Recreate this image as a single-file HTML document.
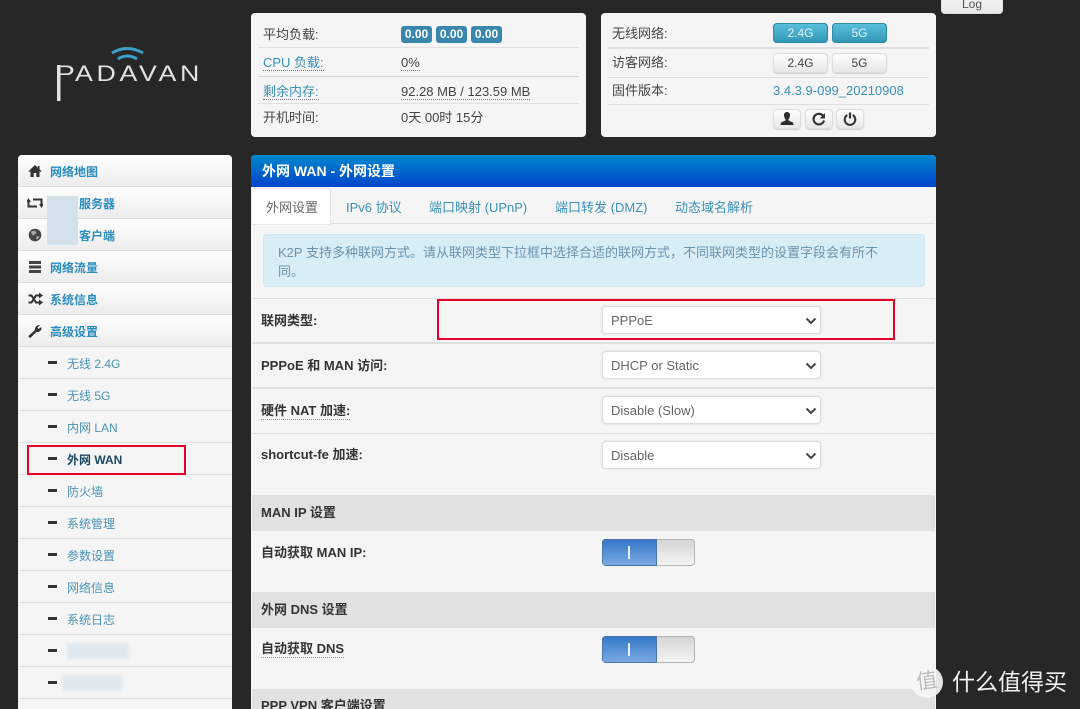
<!DOCTYPE html>
<html lang="zh"><head><meta charset="utf-8"><title>Padavan</title>
<style>
html,body{margin:0;padding:0;width:1080px;height:709px;overflow:hidden;background:#272727}
body{position:relative;font:13px/18px "Liberation Sans","Noto Sans CJK SC",sans-serif;color:#444}
.a{position:absolute;white-space:nowrap}
.panel{position:absolute;background:#f5f5f5;border-radius:4px}
.ln{position:absolute;height:1px;background:#dfdfdf}
.lnk{color:#3a91b8}
.dot{border-bottom:1px dotted #778}
.badge{position:absolute;top:26px;height:17px;width:31px;background:#3a87ad;border-radius:3px;color:#fff;font:bold 12px/17px "Liberation Sans",sans-serif;text-align:center}
.btn{position:absolute;border-radius:4px;text-align:center;font-size:12px;color:#444;background:linear-gradient(#fff,#e6e6e6);box-shadow:0 0 0 1px #ddd inset,0 1px 1px rgba(0,0,0,.15)}
.on{background:linear-gradient(#5bc0de,#2f96b4);color:#e4f2f6;box-shadow:0 0 0 1px #2f8aa6 inset}
.nav{position:absolute;left:18px;width:214px;height:31px;background:linear-gradient(#fff,#ececec);border-bottom:1px solid #dcdcdc}
.nav b{position:absolute;top:8px;left:32px;font-size:12px;font-weight:bold;line-height:18px;color:#2a8dc0;white-space:nowrap}
.nav svg{position:absolute;left:9px;top:8.500px}
.sub{position:absolute;left:18px;width:214px;height:31px;border-bottom:1px solid #e2e2e2}
.sub i{position:absolute;left:30px;top:14px;width:9px;height:3px;background:#333}
.sub span{position:absolute;left:49px;top:8px;font-size:12px;line-height:18px;color:#4a94b8;white-space:nowrap}
.lab{position:absolute;left:261px;font-weight:bold;font-size:13px;color:#333;white-space:nowrap}
.sel{position:absolute;left:602px;width:219px;height:28px;background:#fff;border:1px solid #ddd;border-radius:4px;box-sizing:border-box;padding-left:8px;font-size:13px;line-height:28px;color:#666;box-shadow:0 0 2px rgba(0,0,0,.12)}
.sel svg{position:absolute;right:3px;top:10px}
.sec{position:absolute;left:252px;width:683px;background:#e1e1e1}
.tog{position:absolute;left:602px;width:93px;height:27px;border-radius:4px;overflow:hidden;box-shadow:0 0 0 1px #b5b5b5 inset;background:linear-gradient(#d4d4d4,#f5f5f5)}
.tog u{position:absolute;left:0;top:0;width:55px;height:27px;background:linear-gradient(#3377c8,#7cabe2);box-shadow:0 0 0 1px #4a76ab inset}
.tog s{position:absolute;left:26px;top:7px;width:2px;height:13px;background:#e8f0fa}
.tab{position:absolute;top:190px;font-size:13px;line-height:18px;color:#3a91b8;white-space:nowrap}
</style></head><body>

<svg class="a" style="left:50px;top:40px" width="155" height="66" viewBox="50 40 155 66">
<path d="M112 53Q127 44 143 53" fill="none" stroke="#3a9fca" stroke-width="3"/>
<path d="M118 59Q127 53 137 59" fill="none" stroke="#3a9fca" stroke-width="3"/>
<text x="55" y="81" font-family="Liberation Sans" font-size="22" fill="#e2e2e2" textLength="20" lengthAdjust="spacingAndGlyphs">P</text>
<text x="75" y="81" font-family="Liberation Sans" font-size="22" fill="#e2e2e2" letter-spacing="3" textLength="128" lengthAdjust="spacingAndGlyphs">ADAVAN</text>
<rect x="57" y="65" width="3.500" height="36" fill="#e2e2e2"/>
</svg>

<div class="panel" style="left:251px;top:13px;width:335px;height:124px"></div>
<div class="a" style="left:263px;top:26px">平均负载:</div>
<div class="badge" style="left:401px">0.00</div><div class="badge" style="left:436px">0.00</div><div class="badge" style="left:471px">0.00</div>
<div class="ln" style="left:258px;top:47px;width:321px"></div>
<div class="a lnk" style="left:263px;top:54px;line-height:17px"><span class="dot">CPU 负载:</span></div>
<div class="a" style="left:401px;top:54px;line-height:17px"><span class="dot">0%</span></div>
<div class="ln" style="left:258px;top:76px;width:321px;background:#d5d5d5"></div>
<div class="a lnk" style="left:263px;top:83px;line-height:17px"><span class="dot">剩余内存:</span></div>
<div class="a" style="left:401px;top:83px;line-height:17px"><span class="dot">92.28 MB / 123.59 MB</span></div>
<div class="ln" style="left:258px;top:103px;width:321px"></div>
<div class="a" style="left:263px;top:109px">开机时间:</div>
<div class="a" style="left:401px;top:109px">0天 00时 15分</div>

<div class="panel" style="left:601px;top:13px;width:335px;height:124px"></div>
<div class="a" style="left:612px;top:25px">无线网络:</div>
<div class="btn on" style="left:773px;top:23px;width:55px;height:20px;line-height:20px">2.4G</div>
<div class="btn on" style="left:832px;top:23px;width:55px;height:20px;line-height:20px">5G</div>
<div class="ln" style="left:608px;top:47px;width:321px;height:2px"></div>
<div class="a" style="left:612px;top:54px">访客网络:</div>
<div class="btn" style="left:773px;top:53px;width:55px;height:20px;line-height:20px">2.4G</div>
<div class="btn" style="left:832px;top:53px;width:55px;height:20px;line-height:20px">5G</div>
<div class="ln" style="left:608px;top:77px;width:321px"></div>
<div class="a" style="left:612px;top:82px">固件版本:</div>
<div class="a lnk" style="left:773px;top:82px">3.4.3.9-099_20210908</div>
<div class="ln" style="left:608px;top:104px;width:321px"></div>
<div class="btn" style="left:773px;top:109px;width:28px;height:20px"><svg width="14" height="14" viewBox="0 0 14 14" style="margin-top:3px"><path d="M7 0C4.800 0 4 1.600 4 3.500 4 5 4.800 6.500 5.500 7.300L5.500 8.500 1 10.500 0.500 13H13.500L13 10.500 8.500 8.500 8.500 7.300C9.200 6.500 10 5 10 3.500 10 1.600 9.200 0 7 0Z" fill="#2d2d2d"/></svg></div>
<div class="btn" style="left:805px;top:109px;width:28px;height:20px"><svg width="14" height="14" viewBox="0 0 14 14" style="margin-top:3px"><path d="M11.500 4.500A5.300 5.300 0 1 0 12 8.500" fill="none" stroke="#333" stroke-width="2.200"/><path d="M13 1V6.500H7.800Z" fill="#333"/></svg></div>
<div class="btn" style="left:836px;top:109px;width:28px;height:20px"><svg width="14" height="14" viewBox="0 0 14 14" style="margin-top:3px"><path d="M4.300 3A5.300 5.300 0 1 0 9.700 3" fill="none" stroke="#333" stroke-width="2"/><path d="M7 0.500V6.500" stroke="#333" stroke-width="2.200"/></svg></div>

<div class="btn" style="left:941px;top:-6px;width:62px;height:20px;line-height:20px;font-size:12px;color:#555;background:linear-gradient(#f4f4f4,#e8e8e8)">Log</div>

<!-- sidebar -->
<div class="panel" style="left:18px;top:155px;width:214px;height:560px"></div>
<div class="nav" style="top:155px;border-radius:4px 4px 0 0"><svg width="14" height="14" viewBox="0 0 14 14" style="left:10px"><path d="M7 1 0.500 7.300 1.500 8 2.500 7.200V13H5.700V9H8.300V13H11.500V7.200L12.500 8 13.500 7.300 11.500 5.300V2H9.800V3.700Z" fill="#333"/></svg><b>网络地图</b></div>
<div class="nav" style="top:187px"><svg width="16" height="14" viewBox="0 0 16 14" style="left:9px"><path d="M1.500 5V10.500H10M14.500 9V3.500H6" fill="none" stroke="#333" stroke-width="2"/><path d="M0 5.500 1.500 3 3 5.500ZM13 8.500H16L14.500 11Z" fill="#333" stroke="#333"/></svg><b style="left:61px">服务器</b></div>
<div class="nav" style="top:219px"><svg width="14" height="14" viewBox="0 0 14 14" style="left:10px"><circle cx="7" cy="7" r="6.300" fill="#444"/><path d="M3 3.500 7 2.500 8.500 5 5.500 7.500 3.500 6ZM9 8 11.500 8.500 9.500 11.500 8 10.500Z" fill="#aaa"/></svg><b style="left:61px">客户端</b></div>
<div class="nav" style="top:251px"><svg width="14" height="14" viewBox="0 0 14 14" style="left:10px"><path d="M1 1H13V4H1ZM1 5.500H13V8.500H1ZM1 10H13V13H1Z" fill="#444"/></svg><b>网络流量</b></div>
<div class="nav" style="top:283px"><svg width="15" height="14" viewBox="0 0 15 14" style="left:10px"><path d="M0.500 3.500H3.500L8 10.500H11.500M0.500 10.500H3.500L8 3.500H11.500" fill="none" stroke="#333" stroke-width="2"/><path d="M11 0.500 15 3.500 11 6.500ZM11 7.500 15 10.500 11 13.500Z" fill="#333"/></svg><b>系统信息</b></div>
<div class="nav" style="top:315px"><svg width="14" height="14" viewBox="0 0 14 14" style="left:10px"><path d="M1 13.500 0.500 12 7 6C6.600 3.500 8.500 0.800 12 1L9.500 3.500 10.500 5 13.500 3C14 6.500 11 8.500 8.500 8L2.500 13.800Z" fill="#333"/></svg><b>高级设置</b></div>
<div class="a" style="left:47px;top:196px;width:31px;height:49px;background:#d3e2ea"></div>

<div class="sub" style="top:347px"><i></i><span>无线 2.4G</span></div>
<div class="sub" style="top:379px"><i></i><span>无线 5G</span></div>
<div class="sub" style="top:411px"><i></i><span>内网 LAN</span></div>
<div class="sub" style="top:443px"><i></i><span style="font-weight:bold;color:#1d4a63">外网 WAN</span></div>
<div class="sub" style="top:475px"><i></i><span>防火墙</span></div>
<div class="sub" style="top:507px"><i></i><span>系统管理</span></div>
<div class="sub" style="top:539px"><i></i><span>参数设置</span></div>
<div class="sub" style="top:571px"><i></i><span>网络信息</span></div>
<div class="sub" style="top:603px"><i></i><span>系统日志</span></div>
<div class="sub" style="top:635px"><i></i></div>
<div class="sub" style="top:667px"><i></i></div>
<div class="a" style="left:67px;top:643px;width:62px;height:16px;background:#dfe8ee;filter:blur(1.500px)"></div>
<div class="a" style="left:62px;top:675px;width:60px;height:16px;background:#dfe8ee;filter:blur(1.500px)"></div>
<div class="a" style="left:27px;top:445px;width:159px;height:30px;box-sizing:border-box;border:2px solid #e8002a"></div>

<!-- main -->
<div class="panel" style="left:251px;top:155px;width:685px;height:560px"></div>
<div class="a" style="left:251px;top:155px;width:685px;height:32px;border-radius:4px 4px 0 0;background:linear-gradient(#0088cc,#0044cc)"></div>
<div class="a" style="left:262px;top:162px;font-size:14px;font-weight:bold;color:#fff">外网 WAN - 外网设置</div>
<div class="ln" style="left:252px;top:223px;width:683px"></div>
<div class="a" style="left:252px;top:189px;width:78px;height:35px;background:#fff;border-radius:3px 3px 0 0;box-shadow:0 0 0 1px #e6e6e6"></div>
<div class="tab" style="left:266px;top:199px;color:#666">外网设置</div>
<div class="tab" style="left:346px;top:199px">IPv6 协议</div>
<div class="tab" style="left:429px;top:199px">端口映射 (UPnP)</div>
<div class="tab" style="left:555px;top:199px">端口转发 (DMZ)</div>
<div class="tab" style="left:675px;top:199px">动态域名解析</div>
<div class="a" style="left:263px;top:234px;width:662px;height:53px;background:#d9edf7;border:1px solid #d0e6f2;border-radius:4px;box-sizing:border-box"></div>
<div class="a" style="left:278px;top:243px;color:#6a93ad;line-height:19px">K2P 支持多种联网方式。请从联网类型下拉框中选择合适的联网方式，不同联网类型的设置字段会有所不<br>同。</div>

<div class="ln" style="left:252px;top:298px;width:683px"></div>
<div class="lab" style="top:312px">联网类型:</div>
<div class="sel" style="top:306px">PPPoE<svg width="12" height="8" viewBox="0 0 12 8"><path d="M1.500 1.500 6 6 10.500 1.500" fill="none" stroke="#444" stroke-width="2"/></svg></div>
<div class="a" style="left:437px;top:299px;width:458px;height:41px;box-sizing:border-box;border:2px solid #e8002a"></div>
<div class="ln" style="left:252px;top:342px;width:683px;height:2px"></div>
<div class="lab" style="top:357px">PPPoE 和 MAN 访问:</div>
<div class="sel" style="top:351px">DHCP or Static<svg width="12" height="8" viewBox="0 0 12 8"><path d="M1.500 1.500 6 6 10.500 1.500" fill="none" stroke="#444" stroke-width="2"/></svg></div>
<div class="ln" style="left:252px;top:387px;width:683px;height:2px"></div>
<div class="lab" style="top:402px"><span style="border-bottom:1px dotted #999;line-height:16px;display:inline-block">硬件 NAT 加速:</span></div>
<div class="sel" style="top:396px">Disable (Slow)<svg width="12" height="8" viewBox="0 0 12 8"><path d="M1.500 1.500 6 6 10.500 1.500" fill="none" stroke="#444" stroke-width="2"/></svg></div>
<div class="ln" style="left:252px;top:433px;width:683px"></div>
<div class="lab" style="top:446px">shortcut-fe 加速:</div>
<div class="sel" style="top:441px">Disable<svg width="12" height="8" viewBox="0 0 12 8"><path d="M1.500 1.500 6 6 10.500 1.500" fill="none" stroke="#444" stroke-width="2"/></svg></div>

<div class="sec" style="top:495px;height:36px"></div>
<div class="lab" style="top:504px">MAN IP 设置</div>
<div class="lab" style="top:544px">自动获取 MAN IP:</div>
<div class="tog" style="top:539px"><u></u><s></s></div>
<div class="sec" style="top:592px;height:36px"></div>
<div class="lab" style="top:601px">外网 DNS 设置</div>
<div class="lab" style="top:640px"><span style="border-bottom:1px dotted #999;line-height:17px;display:inline-block">自动获取 DNS</span></div>
<div class="tog" style="top:636px"><u></u><s></s></div>
<div class="sec" style="top:689px;height:30px"></div>
<div class="lab" style="top:697px">PPP VPN 客户端设置</div>

<!-- watermark -->
<div class="a" style="left:911px;top:666px;width:32px;height:32px;border-radius:50%;background:rgba(245,245,245,.92);text-align:center;font-size:21px;line-height:32px;color:#bbb;transform:rotate(-8deg)">值</div>
<div class="a" style="left:952px;top:668px;font-size:23px;line-height:28px;color:#f2f2f2">什么值得买</div>
</body></html>
